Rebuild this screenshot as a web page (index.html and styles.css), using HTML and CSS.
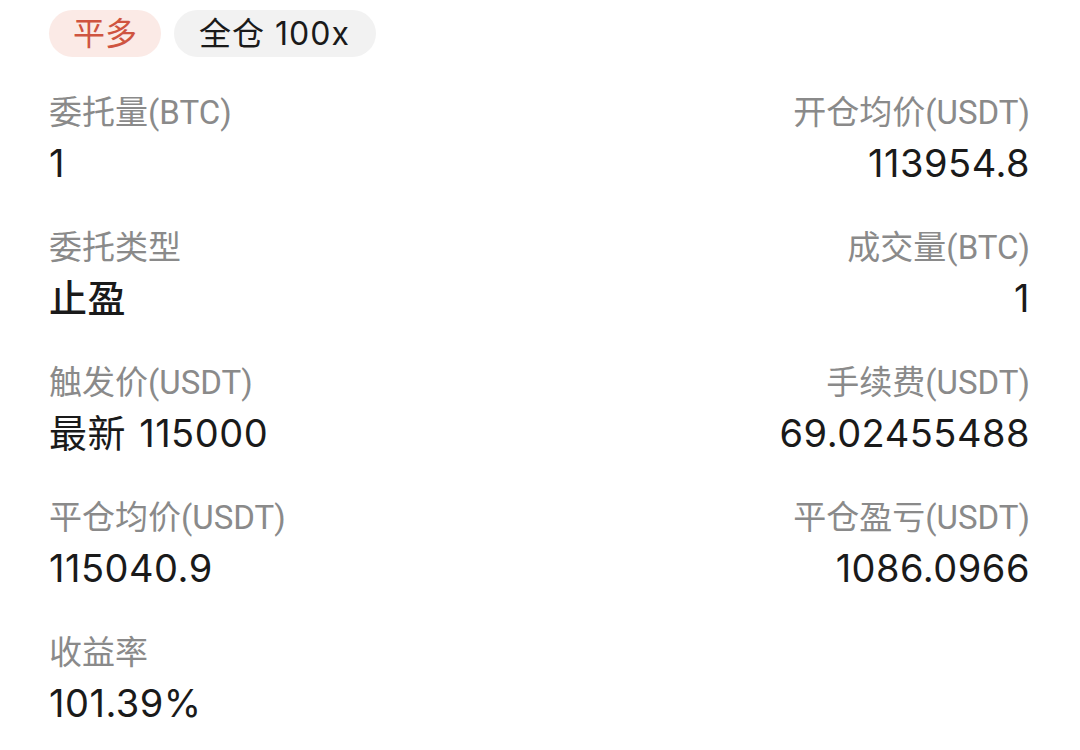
FILE: index.html
```html
<!DOCTYPE html>
<html lang="zh-CN">
<head>
<meta charset="utf-8">
<link rel="stylesheet" href="styles.css">
</head>
<body>
<div class="page">
  <div class="tags">
    <span class="tag tag-long">平多</span>
    <span class="tag tag-mode">全仓 100x</span>
  </div>
  <div class="grid">
    <div class="cell"><div class="label">委托量(BTC)</div><div class="value">1</div></div>
    <div class="cell right"><div class="label">开仓均价(USDT)</div><div class="value">113954.8</div></div>
    <div class="cell"><div class="label">委托类型</div><div class="value cjk">止盈</div></div>
    <div class="cell right"><div class="label">成交量(BTC)</div><div class="value">1</div></div>
    <div class="cell"><div class="label">触发价(USDT)</div><div class="value wide-space">最新 115000</div></div>
    <div class="cell right"><div class="label">手续费(USDT)</div><div class="value">69.02455488</div></div>
    <div class="cell"><div class="label">平仓均价(USDT)</div><div class="value">115040.9</div></div>
    <div class="cell right"><div class="label">平仓盈亏(USDT)</div><div class="value">1086.0966</div></div>
    <div class="cell"><div class="label">收益率</div><div class="value">101.39%</div></div>
  </div>
</div>
</body>
</html>
```
FILE: styles.css
```css
html, body {
  margin: 0;
  padding: 0;
  background: #ffffff;
}
.page {
  width: 1080px;
  height: 750px;
  box-sizing: border-box;
  padding: 10px 50px 0 49px;
  overflow: hidden;
}
.tags {
  display: flex;
  gap: 13px;
  margin-bottom: 34px;
}
.tag {
  height: 47px;
  line-height: 47px;
  padding: 0 24px;
  border-radius: 24px;
  font-family: Inter, "Noto Sans CJK SC", sans-serif;
  font-size: 32px;
}
.tag-long {
  background: #fbeae6;
  color: #cf5440;
}
.tag-mode {
  background: #f2f2f2;
  color: #1a1a1a;
  letter-spacing: 1px;
  padding: 0 26px 0 25px;
}
.grid {
  display: grid;
  grid-template-columns: 1fr 1fr;
  row-gap: 38px;
}
.cell.right {
  text-align: right;
}
.label {
  font-family: Roboto, "Noto Sans CJK SC", sans-serif;
  font-size: 33px;
  line-height: 44px;
  color: #8a8a8a;
  height: 44px;
}
.value {
  font-family: Inter, "Noto Sans CJK SC", sans-serif;
  font-size: 38px;
  letter-spacing: 0.5px;
  line-height: 50px;
  height: 50px;
  margin-top: 3px;
  color: #1a1a1a;
}
.value.cjk {
  font-weight: 500;
}
.value.wide-space {
  word-spacing: 2px;
}
```
